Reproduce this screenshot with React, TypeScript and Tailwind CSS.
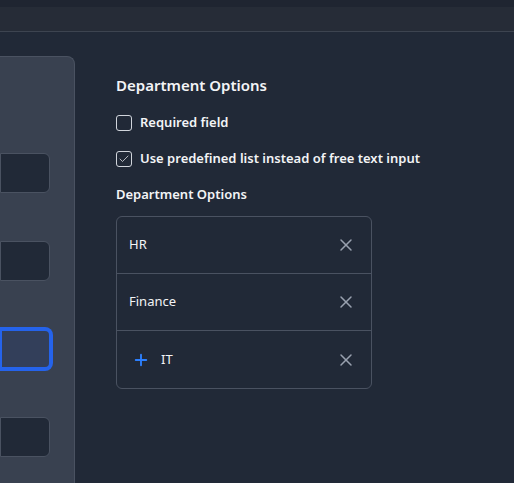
import { X, Plus, Check } from "lucide-react";

const font = { fontFamily: '"Noto Sans", "Open Sans", sans-serif' };

function Checkbox({ checked, label }: { checked: boolean; label: string }) {
  return (
    <label className="flex items-center gap-2 h-4">
      <span className="w-4 h-4 rounded-[3px] border border-gray-300 flex items-center justify-center">
        {checked && <Check className="w-3 h-3 text-gray-200" strokeWidth={1.5} />}
      </span>
      <span className="text-[13px] font-semibold text-gray-100">{label}</span>
    </label>
  );
}

export default function App() {
  const options = ["HR", "Finance", "IT"];
  return (
    <div className="w-[514px] h-[483px] overflow-hidden bg-[#212937] flex flex-col" style={font}>
      <div className="h-[7px] bg-[#1f2531]" />
      <div className="h-[25px] bg-[#262c37] border-b border-[#3d4450]" />
      <div className="flex flex-1 pt-6 gap-[41px]">
        <div className="w-[75px] bg-[#394150] border-r border-t border-[#4a5261] rounded-tr-lg flex flex-col gap-[48px] pt-[96px]">
          <div className="h-[40px] w-[50px] bg-[#212937] border border-[#4a5261] rounded-r-md" />
          <div className="h-[40px] w-[50px] bg-[#212937] border border-[#4a5261] rounded-r-md" />
          <div className="h-[40px] w-[51px] bg-[#333f5a] border-2 border-[#2563eb] ring-2 ring-[#2563eb] rounded-r-md" />
          <div className="h-[40px] w-[50px] bg-[#212937] border border-[#4a5261] rounded-r-md" />
        </div>
        <div className="flex flex-col pt-[19px]">
          <h2 className="text-[15px] font-semibold text-gray-100 leading-5">Department Options</h2>
          <div className="mt-5 flex flex-col gap-5">
            <Checkbox checked={false} label="Required field" />
            <Checkbox checked label="Use predefined list instead of free text input" />
          </div>
          <div className="mt-[17px] text-[13px] font-semibold text-gray-100 leading-5">Department Options</div>
          <div className="mt-3 w-[256px] border border-[#4a5261] rounded-md flex flex-col">
            {options.map((o, i) => (
              <div
                key={o}
                className={`h-[57px] flex items-center px-3 ${i < options.length - 1 ? "border-b border-[#4a5261]" : ""}`}
              >
                {i === options.length - 1 && (
                  <Plus className="w-[18px] h-[18px] text-blue-500 ml-[3px] mr-[11px]" strokeWidth={2.5} />
                )}
                <span className="flex-1 text-[13px] text-gray-100">{o}</span>
                <X className="w-5 h-5 text-gray-400 mr-[3px]" strokeWidth={1.8} />
              </div>
            ))}
          </div>
        </div>
      </div>
    </div>
  );
}
